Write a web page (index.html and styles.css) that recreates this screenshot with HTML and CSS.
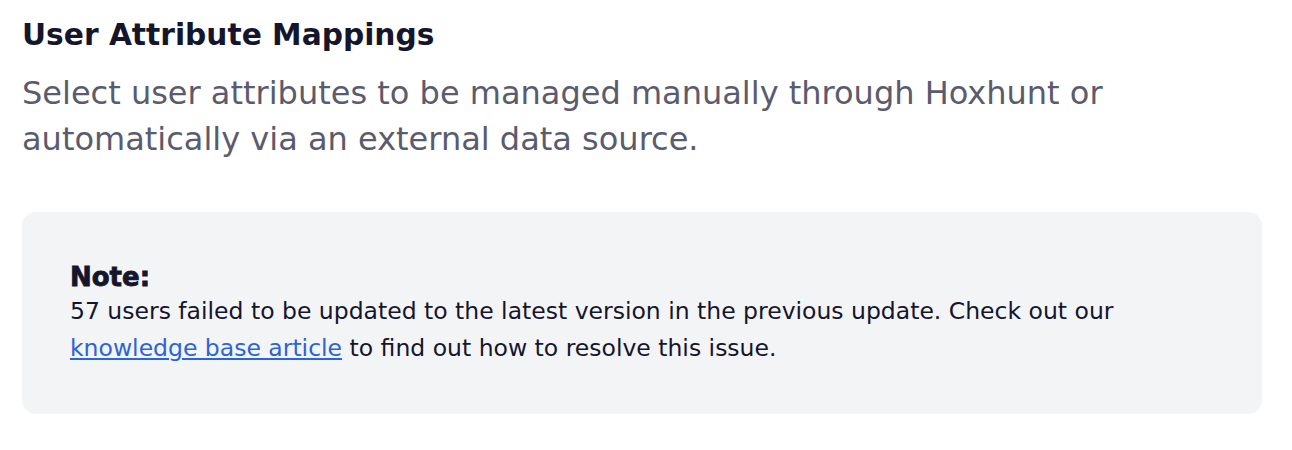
FILE: index.html
```html
<!DOCTYPE html>
<html lang="en">
<head>
    <meta charset="UTF-8">
    <meta name="viewport" content="width=device-width, initial-scale=1.0">
    <title>User Attribute Mappings</title>
    <link rel="stylesheet" href="styles.css">
</head>
<body>

    <!-- Attribute mappings header -->
    <div class="section">
        <h2 class="section-title">User Attribute Mappings</h2>
        <p class="section-desc">Select user attributes to be managed manually through Hoxhunt or automatically via an external data source.</p>

        <!-- Note box -->
        <div class="note">
            <div class="note-title">Note:</div>
            <p class="note-text">57 users failed to be updated to the latest version in the previous update. Check out our <a href="#">knowledge base article</a> to find out how to resolve this issue.</p>
        </div>
    </div>

</body>
</html>
```

FILE: styles.css
```css
/* Styling */
body {
    font-family: "DejaVu Sans", "Open Sans", sans-serif;
    background-color: #ffffff;
    margin: 0;
}
.section {
    padding: 15px 30px 0 22px;
}
.section-title {
    margin: 0;
    font-size: 29.7px;
    line-height: 40px;
    font-weight: bold;
    color: #15152c;
}
.section-desc {
    margin: 15px 0 0;
    max-width: 1100px;
    font-size: 32px;
    line-height: 46px;
    color: #5b5b6e;
}
.note {
    margin-top: 50px;
    width: 1240px;
    box-sizing: border-box;
    padding: 49px 48px 47px;
    background-color: #f3f4f6;
    border-radius: 14px;
}
.note-title {
    font-size: 26px;
    line-height: 32px;
    font-weight: bold;
    color: #15152c;
    -webkit-text-stroke: 0.8px #15152c;
}
.note-text {
    margin: 0;
    font-size: 23.5px;
    line-height: 37px;
    color: #15152c;
}
.note-text a {
    color: #2b63d9;
    text-decoration: underline;
}
```
